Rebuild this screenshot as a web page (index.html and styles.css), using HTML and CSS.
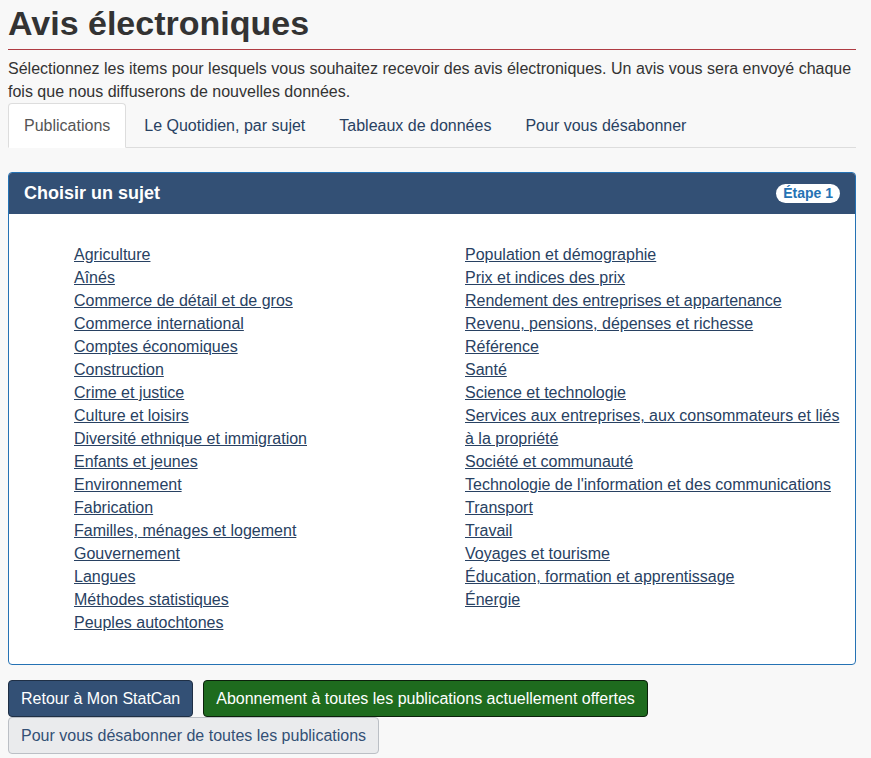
FILE: index.html
```html
<!DOCTYPE html>
<html lang="fr">
<head>
<meta charset="utf-8">
<title>Avis électroniques</title>
<link rel="stylesheet" href="styles.css">
</head>
<body>
<main class="page">
  <h1 class="title">Avis électroniques</h1>
  <p class="intro">Sélectionnez les items pour lesquels vous souhaitez recevoir des avis électroniques. Un avis vous sera envoyé chaque fois que nous diffuserons de nouvelles données.</p>
  <ul class="tabs">
    <li class="tab active"><a href="#">Publications</a></li>
    <li class="tab"><a href="#">Le Quotidien, par sujet</a></li>
    <li class="tab"><a href="#">Tableaux de données</a></li>
    <li class="tab"><a href="#">Pour vous désabonner</a></li>
  </ul>
  <section class="panel">
    <div class="panel-heading">
      <h2 class="panel-title">Choisir un sujet</h2>
      <span class="badge">Étape 1</span>
    </div>
    <div class="panel-body">
      <div class="cols">
        <ul class="links">
          <li><a href="#">Agriculture</a></li>
          <li><a href="#">Aînés</a></li>
          <li><a href="#">Commerce de détail et de gros</a></li>
          <li><a href="#">Commerce international</a></li>
          <li><a href="#">Comptes économiques</a></li>
          <li><a href="#">Construction</a></li>
          <li><a href="#">Crime et justice</a></li>
          <li><a href="#">Culture et loisirs</a></li>
          <li><a href="#">Diversité ethnique et immigration</a></li>
          <li><a href="#">Enfants et jeunes</a></li>
          <li><a href="#">Environnement</a></li>
          <li><a href="#">Fabrication</a></li>
          <li><a href="#">Familles, ménages et logement</a></li>
          <li><a href="#">Gouvernement</a></li>
          <li><a href="#">Langues</a></li>
          <li><a href="#">Méthodes statistiques</a></li>
          <li><a href="#">Peuples autochtones</a></li>
        </ul>
        <ul class="links">
          <li><a href="#">Population et démographie</a></li>
          <li><a href="#">Prix et indices des prix</a></li>
          <li><a href="#">Rendement des entreprises et appartenance</a></li>
          <li><a href="#">Revenu, pensions, dépenses et richesse</a></li>
          <li><a href="#">Référence</a></li>
          <li><a href="#">Santé</a></li>
          <li><a href="#">Science et technologie</a></li>
          <li><a href="#">Services aux entreprises, aux consommateurs et liés à la propriété</a></li>
          <li><a href="#">Société et communauté</a></li>
          <li><a href="#">Technologie de l'information et des communications</a></li>
          <li><a href="#">Transport</a></li>
          <li><a href="#">Travail</a></li>
          <li><a href="#">Voyages et tourisme</a></li>
          <li><a href="#">Éducation, formation et apprentissage</a></li>
          <li><a href="#">Énergie</a></li>
        </ul>
      </div>
    </div>
  </section>
  <div class="actions">
    <a class="btn btn-primary" href="#">Retour à Mon StatCan</a>
    <a class="btn btn-success" href="#">Abonnement à toutes les publications actuellement offertes</a>
    <a class="btn btn-default" href="#">Pour vous désabonner de toutes les publications</a>
  </div>
</main>
</body>
</html>
```
FILE: styles.css
```css
html, body {
  margin: 0;
  padding: 0;
  background: #f8f8f8;
}
body {
  font-family: "Liberation Sans", Arial, sans-serif;
  font-size: 16px;
  line-height: 23px;
  color: #333;
}
.page {
  width: 848px;
  margin-left: 8px;
}
.title {
  margin: 4px 0 0;
  font-size: 34px;
  line-height: 38px;
  font-weight: 700;
  color: #333;
  padding-bottom: 7px;
  border-bottom: 1px solid #af3c43;
}
.intro {
  margin: 7px 0 0;
}
.tabs {
  list-style: none;
  margin: 0;
  padding: 0;
  display: flex;
  border-bottom: 1px solid #ddd;
}
.tab {
  margin-right: 2px;
  margin-bottom: -1px;
}
.tab a {
  display: block;
  padding: 10px 15px;
  border: 1px solid transparent;
  border-radius: 4px 4px 0 0;
  color: #284162;
  text-decoration: none;
}
.tab.active a {
  background: #fff;
  border-color: #ddd;
  border-bottom-color: #fff;
  color: #555;
}
.panel {
  margin-top: 24px;
  background: #fff;
  border: 1px solid #2572b4;
  border-radius: 4px;
  overflow: hidden;
}
.panel-heading {
  background: #335075;
  padding: 10px 15px;
  display: flex;
  align-items: center;
  justify-content: space-between;
}
.panel-title {
  margin: 0;
  font-size: 18px;
  line-height: 21px;
  font-weight: 700;
  color: #fff;
}
.badge {
  background: #fff;
  color: #2572b4;
  font-weight: 700;
  font-size: 14px;
  line-height: 19px;
  padding: 0 7px;
  border-radius: 10px;
}
.panel-body {
  padding: 15px;
}
.cols {
  display: grid;
  grid-template-columns: 391px 375px;
  margin: 14px 0 15px 50px;
}
.links {
  list-style: none;
  margin: 0;
  padding: 0;
}
.links a {
  color: #284162;
  text-decoration: underline;
}
.actions {
  margin-top: 15px;
  display: flex;
  flex-wrap: wrap;
  column-gap: 10px;
}
.btn {
  display: inline-block;
  padding: 6px 12px;
  border: 1px solid transparent;
  border-radius: 4px;
  text-decoration: none;
  line-height: 23px;
  font-size: 16px;
}
.btn-primary {
  background: #335075;
  border-color: #1f2f45;
  color: #fff;
}
.btn-success {
  background: #1e6b1e;
  border-color: #0b200b;
  color: #fff;
}
.btn-default {
  background: #eaebed;
  border-color: #bbbfc5;
  color: #335075;
}
```
